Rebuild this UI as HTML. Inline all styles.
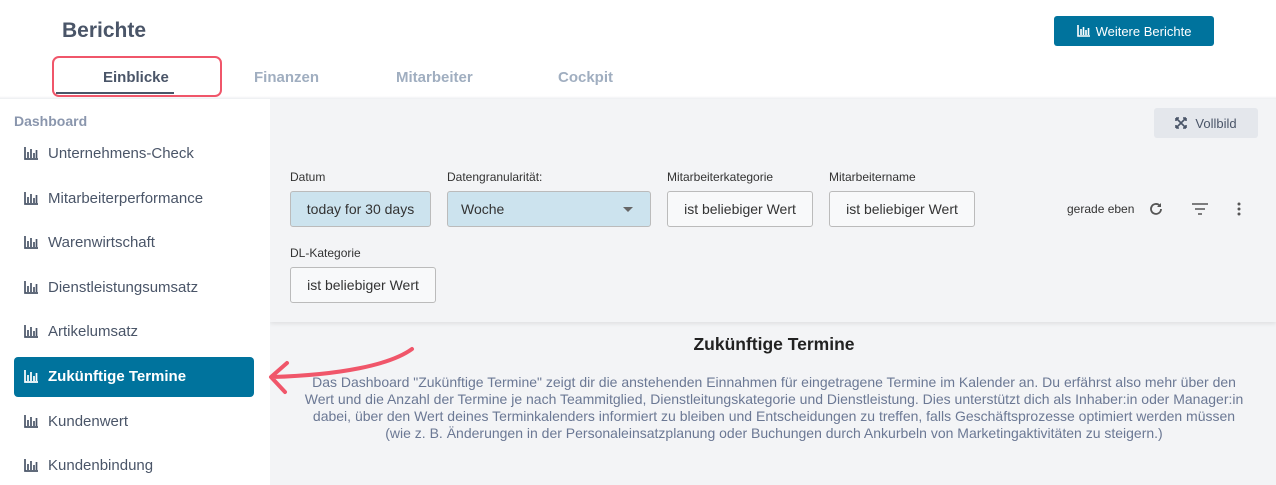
<!DOCTYPE html>
<html><head><meta charset="utf-8"><style>
*{box-sizing:border-box;margin:0;padding:0}
body{width:1276px;height:485px;overflow:hidden;background:#fff;font-family:"Liberation Sans",sans-serif;position:relative}
.a{position:absolute}
.h1{left:62px;top:19px;font-size:21px;font-weight:bold;color:#4a5568}
.tab{top:69px;font-size:15px;font-weight:bold;color:#a0aec0}
.btn{left:1054px;top:16px;width:160px;height:30px;background:#00739d;border-radius:3px;color:#fff;font-size:13px;display:flex;align-items:center;justify-content:center;gap:5px}
.main{left:270px;top:98px;width:1006px;height:387px;background:#f3f4f6}
.panel{left:270px;top:98px;width:1006px;height:224px;background:#f3f4f6;box-shadow:0 2px 4px rgba(0,0,0,.08)}
.topsh{left:0;top:96px;width:1276px;height:3px;background:linear-gradient(#fff,#eceef1)}
.side{left:0;top:98px;width:270px;height:387px;background:#fff}
.dash{left:14px;top:113px;font-size:14px;font-weight:bold;color:#8a96ad}
.item{left:24px;font-size:15px;color:#4a5568;display:flex;align-items:center;gap:9px;height:20px}
.item svg{flex:none}
.sel{left:14px;top:357px;width:240px;height:40px;background:#00739d;border-radius:4px}
.lbl{font-size:12px;color:#333}
.box{height:36px;border:1px solid #bbb;border-radius:3px;background:#f8f9fa;font-size:14px;color:#333;display:flex;align-items:center;justify-content:center}
.blue{background:#cce3ee}
.desc{left:300px;top:374px;width:948px;text-align:center;font-size:14px;line-height:17px;color:#6b7894}
</style></head><body>
<div class="a main"></div>
<div class="a panel"></div>
<div class="a side"></div>
<div class="a topsh"></div>
<div class="a h1">Berichte</div>
<div class="a" style="left:52px;top:56px;width:170px;height:41px;border:2.5px solid #f0566a;border-radius:7px"></div>
<div class="a" style="left:56px;top:92px;width:118px;height:2px;background:#4a5568"></div>
<div class="a tab" style="left:103px;color:#4a5568">Einblicke</div>
<div class="a tab" style="left:254px">Finanzen</div>
<div class="a tab" style="left:396px">Mitarbeiter</div>
<div class="a tab" style="left:558px">Cockpit</div>
<div class="a btn"><svg width="14" height="12" viewBox="0 0 14 12"><path d="M1 0v11h12M4 4v6M6.5 2v8M9 5v5M11.5 3v7" stroke="#fff" stroke-width="1.6" fill="none"/></svg>Weitere Berichte</div>

<div class="a dash">Dashboard</div>
<div class="a sel"></div>
<div class="a" style="left:1154px;top:108px;width:104px;height:30px;background:#e4e7ec;border-radius:3px;font-size:13px;color:#4a5568;display:flex;align-items:center;justify-content:center;gap:8px"><svg width="12" height="12" viewBox="0 0 12 12" stroke="#4a5568" stroke-width="1.6" fill="none"><path d="M1 1l10 10M11 1L1 11M1 1h3M1 1v3M11 1h-3M11 1v3M1 11h3M1 11v-3M11 11h-3M11 11v-3"/></svg>Vollbild</div>

<div class="a lbl" style="left:290px;top:170px">Datum</div>
<div class="a box blue" style="left:290px;top:191px;width:141px">today for 30 days</div>
<div class="a lbl" style="left:447px;top:170px">Datengranularität:</div>
<div class="a box blue" style="left:447px;top:191px;width:204px;justify-content:space-between;padding:0 17px 0 13px">Woche<span style="border:5px solid transparent;border-top:5px solid #666;margin-top:5px"></span></div>
<div class="a lbl" style="left:667px;top:170px">Mitarbeiterkategorie</div>
<div class="a box" style="left:667px;top:191px;width:146px">ist beliebiger Wert</div>
<div class="a lbl" style="left:829px;top:170px">Mitarbeitername</div>
<div class="a box" style="left:829px;top:191px;width:146px">ist beliebiger Wert</div>
<div class="a lbl" style="left:1067px;top:202px;font-size:12px">gerade eben</div>
<svg class="a" style="left:1148px;top:201px" width="16" height="16" viewBox="0 0 16 16"><path d="M13 8a5 5 0 1 1-1.5-3.6" stroke="#555" stroke-width="1.8" fill="none"/><path d="M13 2v4h-4z" fill="#555"/></svg>
<svg class="a" style="left:1192px;top:203px" width="16" height="12"><path d="M0 1h16M3 6h10M6 11h4" stroke="#555" stroke-width="1.6"/></svg>
<svg class="a" style="left:1236px;top:201px" width="6" height="16"><circle cx="3" cy="3" r="1.5" fill="#555"/><circle cx="3" cy="8" r="1.5" fill="#555"/><circle cx="3" cy="13" r="1.5" fill="#555"/></svg>
<div class="a lbl" style="left:290px;top:246px">DL-Kategorie</div>
<div class="a box" style="left:290px;top:267px;width:146px">ist beliebiger Wert</div>

<div class="a" style="left:570px;top:334px;width:408px;text-align:center;font-size:17.5px;font-weight:bold;color:#222">Zukünftige Termine</div>
<div class="a desc">Das Dashboard "Zukünftige Termine" zeigt dir die anstehenden Einnahmen für eingetragene Termine im Kalender an. Du erfährst also mehr über den<br>Wert und die Anzahl der Termine je nach Teammitglied, Dienstleitungskategorie und Dienstleistung. Dies unterstützt dich als Inhaber:in oder Manager:in<br>dabei, über den Wert deines Terminkalenders informiert zu bleiben und Entscheidungen zu treffen, falls Geschäftsprozesse optimiert werden müssen<br>(wie z. B. Änderungen in der Personaleinsatzplanung oder Buchungen durch Ankurbeln von Marketingaktivitäten zu steigern.)</div>
<svg class="a" style="left:260px;top:340px" width="170" height="60"><path d="M152 9C130 25 80 35 12 37M27 23L11 37L25 52" stroke="#f0566a" stroke-width="4" fill="none" stroke-linecap="round" stroke-linejoin="round"/></svg>
<div class="a item" style="top:143px"><svg width="15" height="13" viewBox="0 0 15 13"><path d="M1 0v12h13M4 5v6M7 2v9M10 6v5M12.5 3v8" stroke="#4a5568" stroke-width="1.7" fill="none"/></svg>Unternehmens-Check</div>
<div class="a item" style="top:188px"><svg width="15" height="13" viewBox="0 0 15 13"><path d="M1 0v12h13M4 5v6M7 2v9M10 6v5M12.5 3v8" stroke="#4a5568" stroke-width="1.7" fill="none"/></svg>Mitarbeiterperformance</div>
<div class="a item" style="top:232px"><svg width="15" height="13" viewBox="0 0 15 13"><path d="M1 0v12h13M4 5v6M7 2v9M10 6v5M12.5 3v8" stroke="#4a5568" stroke-width="1.7" fill="none"/></svg>Warenwirtschaft</div>
<div class="a item" style="top:277px"><svg width="15" height="13" viewBox="0 0 15 13"><path d="M1 0v12h13M4 5v6M7 2v9M10 6v5M12.5 3v8" stroke="#4a5568" stroke-width="1.7" fill="none"/></svg>Dienstleistungsumsatz</div>
<div class="a item" style="top:321px"><svg width="15" height="13" viewBox="0 0 15 13"><path d="M1 0v12h13M4 5v6M7 2v9M10 6v5M12.5 3v8" stroke="#4a5568" stroke-width="1.7" fill="none"/></svg>Artikelumsatz</div>
<div class="a item" style="top:366px;color:#fff;font-weight:bold"><svg width="15" height="13" viewBox="0 0 15 13"><path d="M1 0v12h13M4 5v6M7 2v9M10 6v5M12.5 3v8" stroke="#fff" stroke-width="1.7" fill="none"/></svg>Zukünftige Termine</div>
<div class="a item" style="top:411px"><svg width="15" height="13" viewBox="0 0 15 13"><path d="M1 0v12h13M4 5v6M7 2v9M10 6v5M12.5 3v8" stroke="#4a5568" stroke-width="1.7" fill="none"/></svg>Kundenwert</div>
<div class="a item" style="top:455px"><svg width="15" height="13" viewBox="0 0 15 13"><path d="M1 0v12h13M4 5v6M7 2v9M10 6v5M12.5 3v8" stroke="#4a5568" stroke-width="1.7" fill="none"/></svg>Kundenbindung</div>
</body></html>
